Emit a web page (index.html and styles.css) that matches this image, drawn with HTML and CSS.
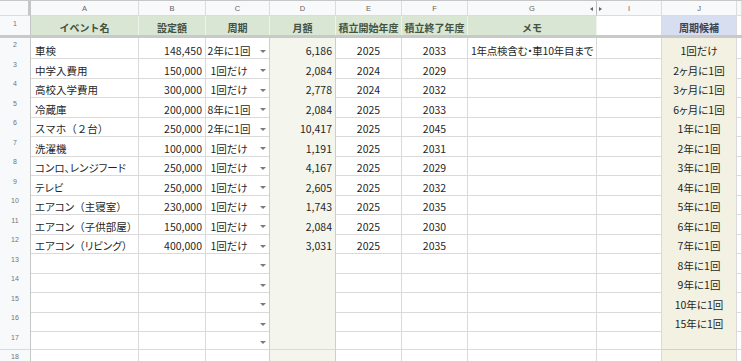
FILE: index.html
```html
<!DOCTYPE html>
<html lang="ja">
<head>
<meta charset="utf-8">
<title>積立表</title>
<link rel="stylesheet" href="styles.css">
</head>
<body>
<div class="sheet">
  <div class="row colhdr">
    <div class="c rh corner"></div>
    <div class="c">A</div><div class="c">B</div><div class="c">C</div><div class="c">D</div><div class="c">E</div><div class="c">F</div>
    <div class="c hid-l">G<span class="tri-l"></span></div>
    <div class="c hid-r"><span class="tri-r"></span>I</div>
    <div class="c">J</div><div class="c"></div>
  </div>
  <div class="row head">
    <div class="c rh">1</div>
    <div class="c g">イベント名</div><div class="c g">設定額</div><div class="c g">周期</div><div class="c g">月額</div><div class="c g">積立開始年度</div><div class="c g">積立終了年度</div><div class="c g">メモ</div>
    <div class="c"></div><div class="c blue">周期候補</div><div class="c"></div>
  </div>
  <div class="freeze"></div>

  <div class="row body"><div class="c rh">2</div><div class="c l">車検</div><div class="c r">148,450</div><div class="c dd"><span>2年に1回</span><i></i></div><div class="c r mon">6,186</div><div class="c m">2025</div><div class="c m">2033</div><div class="c l memo">1年点検含む・車10年目まで</div><div class="c"></div><div class="c m cand">1回だけ</div><div class="c"></div></div>
  <div class="row body"><div class="c rh">3</div><div class="c l">中学入費用</div><div class="c r">150,000</div><div class="c dd"><span>1回だけ</span><i></i></div><div class="c r mon">2,084</div><div class="c m">2024</div><div class="c m">2029</div><div class="c l"></div><div class="c"></div><div class="c m cand">2ヶ月に1回</div><div class="c"></div></div>
  <div class="row body"><div class="c rh">4</div><div class="c l">高校入学費用</div><div class="c r">300,000</div><div class="c dd"><span>1回だけ</span><i></i></div><div class="c r mon">2,778</div><div class="c m">2024</div><div class="c m">2032</div><div class="c l"></div><div class="c"></div><div class="c m cand">3ヶ月に1回</div><div class="c"></div></div>
  <div class="row body"><div class="c rh">5</div><div class="c l">冷蔵庫</div><div class="c r">200,000</div><div class="c dd"><span>8年に1回</span><i></i></div><div class="c r mon">2,084</div><div class="c m">2025</div><div class="c m">2033</div><div class="c l"></div><div class="c"></div><div class="c m cand">6ヶ月に1回</div><div class="c"></div></div>
  <div class="row body"><div class="c rh">6</div><div class="c l wide">スマホ（２台）</div><div class="c r">250,000</div><div class="c dd"><span>2年に1回</span><i></i></div><div class="c r mon">10,417</div><div class="c m">2025</div><div class="c m">2045</div><div class="c l"></div><div class="c"></div><div class="c m cand">1年に1回</div><div class="c"></div></div>
  <div class="row body"><div class="c rh">7</div><div class="c l">洗濯機</div><div class="c r">100,000</div><div class="c dd"><span>1回だけ</span><i></i></div><div class="c r mon">1,191</div><div class="c m">2025</div><div class="c m">2031</div><div class="c l"></div><div class="c"></div><div class="c m cand">2年に1回</div><div class="c"></div></div>
  <div class="row body"><div class="c rh">8</div><div class="c l">コンロ、レンジフード</div><div class="c r">250,000</div><div class="c dd"><span>1回だけ</span><i></i></div><div class="c r mon">4,167</div><div class="c m">2025</div><div class="c m">2029</div><div class="c l"></div><div class="c"></div><div class="c m cand">3年に1回</div><div class="c"></div></div>
  <div class="row body"><div class="c rh">9</div><div class="c l">テレビ</div><div class="c r">250,000</div><div class="c dd"><span>1回だけ</span><i></i></div><div class="c r mon">2,605</div><div class="c m">2025</div><div class="c m">2032</div><div class="c l"></div><div class="c"></div><div class="c m cand">4年に1回</div><div class="c"></div></div>
  <div class="row body"><div class="c rh">10</div><div class="c l">エアコン<span class="fw">（</span>主寝室<span class="fw">）</span></div><div class="c r">230,000</div><div class="c dd"><span>1回だけ</span><i></i></div><div class="c r mon">1,743</div><div class="c m">2025</div><div class="c m">2035</div><div class="c l"></div><div class="c"></div><div class="c m cand">5年に1回</div><div class="c"></div></div>
  <div class="row body"><div class="c rh">11</div><div class="c l">エアコン<span class="fw">（</span>子供部屋<span class="fw">）</span></div><div class="c r">150,000</div><div class="c dd"><span>1回だけ</span><i></i></div><div class="c r mon">2,084</div><div class="c m">2025</div><div class="c m">2030</div><div class="c l"></div><div class="c"></div><div class="c m cand">6年に1回</div><div class="c"></div></div>
  <div class="row body"><div class="c rh">12</div><div class="c l">エアコン<span class="fw">（</span>リビング<span class="fw">）</span></div><div class="c r">400,000</div><div class="c dd"><span>1回だけ</span><i></i></div><div class="c r mon">3,031</div><div class="c m">2025</div><div class="c m">2035</div><div class="c l"></div><div class="c"></div><div class="c m cand">7年に1回</div><div class="c"></div></div>
  <div class="row body"><div class="c rh">13</div><div class="c l"></div><div class="c r"></div><div class="c dd"><span></span><i></i></div><div class="c r mon"></div><div class="c m"></div><div class="c m"></div><div class="c l"></div><div class="c"></div><div class="c m cand">8年に1回</div><div class="c"></div></div>
  <div class="row body"><div class="c rh">14</div><div class="c l"></div><div class="c r"></div><div class="c dd"><span></span><i></i></div><div class="c r mon"></div><div class="c m"></div><div class="c m"></div><div class="c l"></div><div class="c"></div><div class="c m cand">9年に1回</div><div class="c"></div></div>
  <div class="row body"><div class="c rh">15</div><div class="c l"></div><div class="c r"></div><div class="c dd"><span></span><i></i></div><div class="c r mon"></div><div class="c m"></div><div class="c m"></div><div class="c l"></div><div class="c"></div><div class="c m cand">10年に1回</div><div class="c"></div></div>
  <div class="row body"><div class="c rh">16</div><div class="c l"></div><div class="c r"></div><div class="c dd"><span></span><i></i></div><div class="c r mon"></div><div class="c m"></div><div class="c m"></div><div class="c l"></div><div class="c"></div><div class="c m cand">15年に1回</div><div class="c"></div></div>
  <div class="row body"><div class="c rh">17</div><div class="c l"></div><div class="c r"></div><div class="c dd"><span></span><i></i></div><div class="c r mon"></div><div class="c m"></div><div class="c m"></div><div class="c l"></div><div class="c"></div><div class="c m cand"></div><div class="c"></div></div>
  <div class="row body"><div class="c rh">18</div><div class="c l"></div><div class="c r"></div><div class="c"></div><div class="c r mon"></div><div class="c m"></div><div class="c m"></div><div class="c l"></div><div class="c"></div><div class="c m cand"></div><div class="c"></div></div>
</div>
</body>
</html>
```
FILE: styles.css
```css
* { box-sizing: border-box; }
html, body { margin: 0; padding: 0; background: #fff; }
body {
  font-family: "Noto Sans CJK JP", "Noto Sans", sans-serif;
  font-size: 10.5px;
  font-feature-settings: "palt";
  color: #1f1f1f;
  overflow: hidden;
}
.sheet { width: 742px; }
.row {
  display: grid;
  grid-template-columns: 31px 108px 67px 64px 66px 66px 66px 129px 65px 75px 1fr;
}
.c {
  border-right: 1px solid #dadada;
  border-bottom: 1px solid #dadada;
  display: flex;
  align-items: center;
  white-space: nowrap;
  min-width: 0;
}
.colhdr { height: 16px; border-top: 1px solid #c7c7c7; }
.colhdr .c {
  background: #f8f9fa;
  justify-content: center;
  font-family: "Liberation Sans", Arial, sans-serif;
  font-size: 7.5px;
  color: #5f6368;
  border-color: #dadce0;
  position: relative;
}
.colhdr .corner { border-right: 3px solid #c4c7c5; }
.tri-l, .tri-r {
  position: absolute;
  top: 6px;
  width: 0; height: 0;
  border-top: 2px solid transparent;
  border-bottom: 2px solid transparent;
}
.tri-l { right: 3px; border-right: 3px solid #5f6368; }
.tri-r { left: 2px; border-left: 3px solid #5f6368; }
.hid-l { border-right-color: #bdbdbd !important; }

.rh {
  background: #f8f9fa;
  justify-content: center;
  align-items: flex-start;
  padding-top: 4px;
  font-family: "Liberation Sans", Arial, sans-serif;
  font-size: 7px;
  color: #70757a;
  border-right-color: #c4c7c5;
}
.head { height: 19px; }
.head .c { border-bottom: none; padding-top: 3px; }
.head .rh { padding-top: 4px; }
.head .g {
  background: #d9e6d4;
  justify-content: center;
  font-weight: 700;
  color: #44523f;
  font-size: 10px;
  font-feature-settings: normal;
  border-right-color: #eef3ec;
}
.head .blue {
  background: #d7deef;
  justify-content: center;
  font-weight: 700;
  color: #3c4250;
  font-size: 10px;
  font-feature-settings: normal;
}
.freeze { height: 3px; background: #c9c9c9; }

.body { height: 19.5px; }
.body .c { padding-top: 5px; }
.body .rh { padding-top: 3px; }
.l { padding-left: 4px; }
.memo { padding-left: 3px; letter-spacing: -0.25px; }
.wide, .fw { font-feature-settings: normal; }
.r { justify-content: flex-end; padding-right: 3px; }
.m { justify-content: center; }
.mon { background: #f4f6ee; border-right-color: #c9d3c4; border-left: 1px solid #c9d3c4; margin-left: -1px; }
.cand { background: #f3f1e1; border-bottom-color: #d4d2c4; }
.dd { padding-right: 3px; }
.dd span { flex: 1; text-align: center; padding-right: 8px; }
.dd i {
  width: 0; height: 0;
  border-left: 3px solid transparent;
  border-right: 3px solid transparent;
  border-top: 3px solid #7a7a7a;
  margin-top: 1px;
}
```
